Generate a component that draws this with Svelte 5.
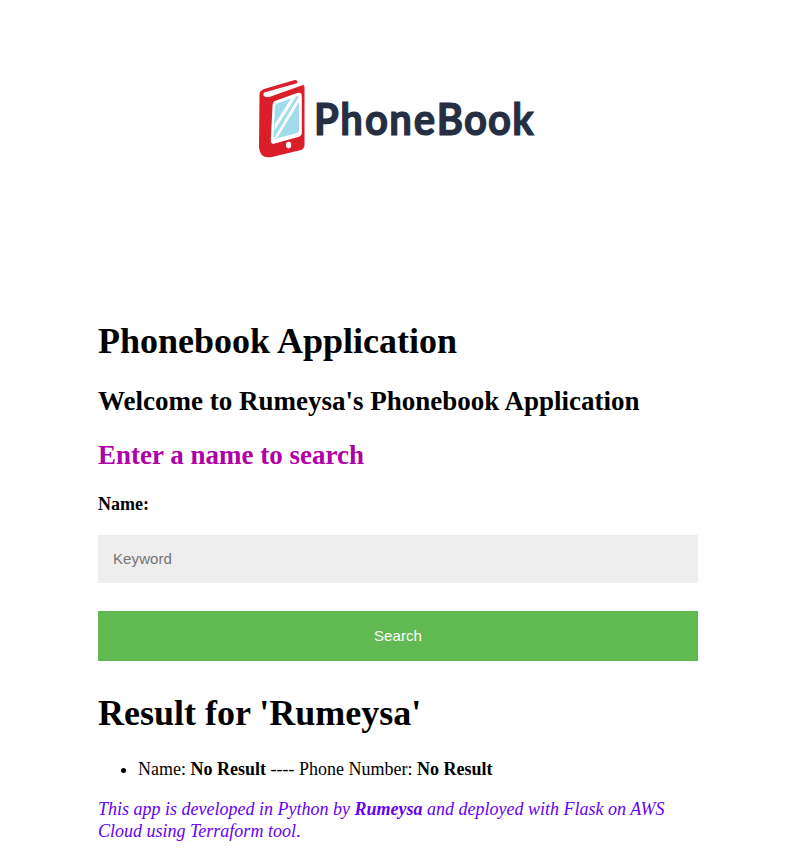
<script>
  let keyword = $state('');
  const result = { query: 'Rumeysa', name: 'No Result', number: 'No Result' };
</script>

<main>
  <svg class="logo" viewBox="0 0 600 320" role="img" aria-label="PhoneBook">
    <path d="M161.500 95Q161 91 166 89L196 80.200Q199.500 79.600 199.500 82.500L199 84.300L168 94L204 84.700Q206.500 84.500 206.500 87.500V145Q206.500 148.500 203 150L174 157Q161.500 159 161 147Z" fill="#da1f2b" />
    <path d="M167 92.200L199 83.200L205 85L172 96.800Q167.500 98 165.700 95.800Q164.500 93.200 167 92.200Z" fill="#fff" />
    <path d="M177 101L199 93Q203.800 92 203.800 96V133Q203.800 136 200 137L176 143.700Q172.700 144 172.800 140.500L174.500 106Q174.500 102 177 101Z" fill="#fff" />
    <path d="M179 103.500L198.500 96.300Q201 95.800 201 98V130.500Q201 132.300 199 133L177.500 138.700Q175.400 139 175.500 137L177 106Q177.100 104.300 179 103.500Z" fill="#a1dced" />
    <path d="M193.500 97.500L198 96.500L176.500 130.500L177 124ZM200 98L201 98V102L179.500 137.500L176 138.500Z" fill="#fff" />
    <ellipse cx="190.600" cy="145.100" rx="2.600" ry="3.300" fill="#fff" />
    <text transform="scale(0.9 1)" x="239.900 269.200 296.600 323.600 350.900 376.500 406.600 433.300 460.300" y="135.200">PhoneBook</text>
  </svg>

  <h1>Phonebook Application</h1>
  <h2>Welcome to Rumeysa's Phonebook Application</h2>
  <h2 class="prompt">Enter a name to search</h2>

  <form onsubmit={(e) => e.preventDefault()}>
    <label for="keyword">Name:</label>
    <input id="keyword" type="text" placeholder="Keyword" bind:value={keyword} />
    <button type="submit">Search</button>
  </form>

  <h1>Result for '{result.query}'</h1>
  <ul>
    <li>Name: <b>{result.name}</b> ---- Phone Number: <b>{result.number}</b></li>
  </ul>
  <p><em>This app is developed in Python by <b>Rumeysa</b> and deployed with Flask on AWS Cloud using Terraform tool</em>.</p>
</main>

<style>
  :global(body) {
    background: #fff;
  }
  main {
    box-sizing: border-box;
    width: 600px;
    height: 849px;
    margin-left: 98px;
    overflow: hidden;
    font-family: 'Liberation Serif', 'Times New Roman', serif;
    font-size: 18px;
    line-height: 20px;
    color: #000;
  }
  .logo {
    display: block;
    width: 600px;
    height: 320px;
  }
  .logo text {
    font-family: Lato, sans-serif;
    font-size: 44.5px;
    font-weight: 700;
    fill: #252e43;
    stroke: #252e43;
    stroke-width: 1.2px;
  }
  h1 {
    margin: 1px 0 24px;
    font-size: 36px;
    line-height: 41px;
  }
  h2 {
    margin: 0 0 24px;
    font-size: 27px;
    line-height: 30px;
  }
  .prompt {
    color: #b000a8;
  }
  form {
    display: flex;
    flex-direction: column;
    margin-bottom: 32px;
  }
  label {
    margin-bottom: 21px;
    font-weight: bold;
  }
  input,
  button {
    box-sizing: border-box;
    width: 100%;
    border: none;
    font-family: 'Liberation Sans', Arial, sans-serif;
    font-size: 15px;
    letter-spacing: 0.1px;
  }
  input {
    height: 48px;
    margin: 0 0 28px;
    padding: 14px 15px 16px;
    background: #eee;
  }
  input::placeholder {
    color: #757575;
  }
  button {
    height: 50px;
    margin: 0;
    padding: 0 0 2px;
    background: #61ba51;
    color: #fff;
    cursor: pointer;
  }
  ul {
    margin: 25px 0 19px;
    padding-left: 40px;
  }
  p {
    margin: 0;
    line-height: 22px;
    color: #6600f5;
  }
</style>
